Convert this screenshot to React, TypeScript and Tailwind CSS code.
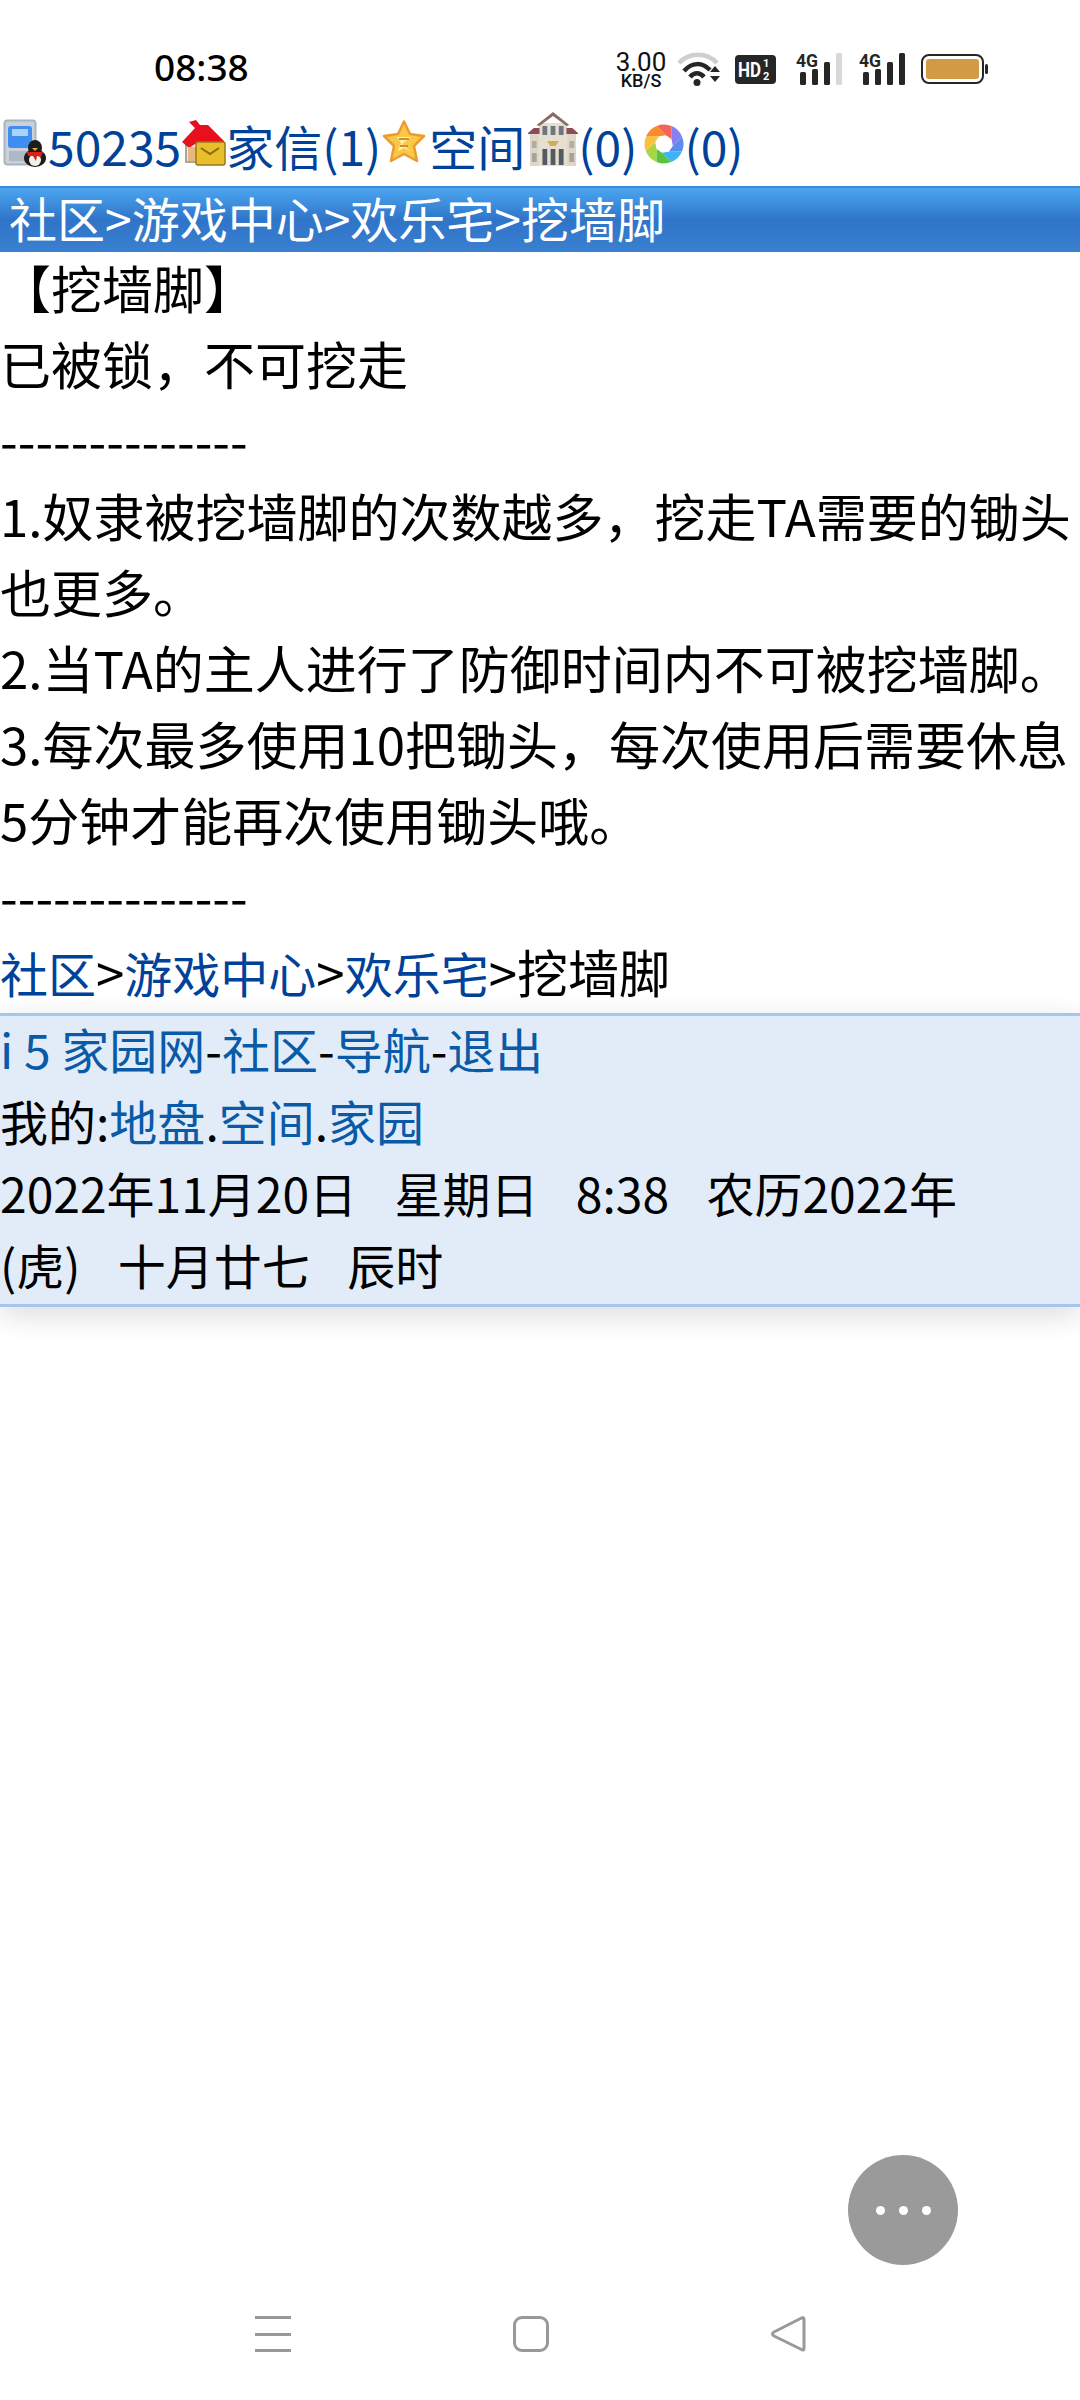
const cjk = { fontFamily: '"Noto Sans CJK SC", "Noto Sans", sans-serif' };

function PhoneQQ() {
    return (
        <svg width="45" height="48" viewBox="0 0 45 48" className="mb-[4px] shrink-0 blur-[0.6px]">
            <rect x="1.5" y="1.5" width="31" height="44" rx="3" fill="#c9d2da" stroke="#a9b4bf" strokeWidth="2" />
            <rect x="5" y="7" width="24" height="22" rx="3" fill="#3f8ff0" />
            <rect x="9" y="10" width="16" height="7" fill="#a9d3fb" />
            <rect x="6" y="32" width="22" height="10" fill="#aeb9c4" />
            <ellipse cx="32" cy="39" rx="11" ry="9" fill="#1d1d1d" />
            <ellipse cx="32" cy="29" rx="7" ry="8" fill="#1d1d1d" />
            <ellipse cx="32" cy="41" rx="6" ry="6" fill="#f3f0ea" />
            <path d="M24 33h16l-2 5-4-1-1 5-3-5-5 0z" fill="#d8201c" />
            <path d="M29 29h6l-3 3z" fill="#f2a922" />
        </svg>
    );
}

function HouseMail() {
    return (
        <svg width="45" height="46" viewBox="0 0 45 46" className="mb-[4px] shrink-0 blur-[0.6px]">
            <path d="M5 20h24v22H5z" fill="#efe9df" stroke="#8f8f8f" strokeWidth="1.5" />
            <path d="M1 22 14 8 8 2l7-2 4 5h8l16 16v3H14l-6 4z" fill="#e8101c" />
            <rect x="7" y="27" width="10" height="14" fill="#e6b77f" />
            <rect x="15" y="22" width="29" height="23" rx="2" fill="#e8bf2a" stroke="#9a7a16" strokeWidth="1.5" />
            <path d="M20 28l9 6 9-6" fill="none" stroke="#8a6b10" strokeWidth="2" />
        </svg>
    );
}

function Star() {
    return (
        <svg width="44" height="43" viewBox="0 0 44 43" className="ml-[1px] mb-[8px] shrink-0 blur-[0.6px]">
            <path d="M22 1.500 28 14l14 2-10 10 3 15-13-7-13 7 3-15L2 16l14-2z" fill="#f8c948" stroke="#ee9a2f" strokeWidth="2.5" strokeLinejoin="round" />
            <path d="M15 17h14l-9 7 8 7-6-3-6 3 3-8z" fill="#fdf0b0" />
            <path d="M17 19h10M18 26h8" stroke="#d9882a" strokeWidth="2" />
        </svg>
    );
}

function Building() {
    return (
        <svg width="50" height="56" viewBox="0 0 52 56" preserveAspectRatio="none" className="ml-[3px] mb-[12px] shrink-0 blur-[0.5px]">
            <rect x="2" y="22" width="48" height="33" fill="#ded7c8" />
            <rect x="11" y="12" width="30" height="43" fill="#e6dfd0" />
            <path d="M9 14 26 1l17 13-3 1-14-10-14 10z" fill="#8d6a6a" />
            <path d="M0 22l6-5h6v6H0zM52 22l-6-5h-6v6h12z" fill="#8c4a5c" />
            <rect x="15" y="15" width="5" height="9" fill="#6e7680" />
            <rect x="23.5" y="15" width="5" height="9" fill="#6e7680" />
            <rect x="32" y="15" width="5" height="9" fill="#6e7680" />
            <path d="M20 30h12l-3 5h-6z" fill="#d3ad55" />
            <rect x="15" y="38" width="5" height="16" fill="#545a60" />
            <rect x="23.5" y="38" width="5" height="16" fill="#545a60" />
            <rect x="32" y="38" width="5" height="16" fill="#545a60" />
            <rect x="4" y="30" width="5" height="7" fill="#b3aea3" />
            <rect x="43" y="30" width="5" height="7" fill="#b3aea3" />
            <rect x="4" y="42" width="5" height="9" fill="#a8a399" />
            <rect x="43" y="42" width="5" height="9" fill="#a8a399" />
        </svg>
    );
}

const blades = ['#f2655f', '#8a7ff0', '#5b8dee', '#3fb4f5', '#5cc43c', '#a6d642', '#f9c23c', '#fb8a2a'];

function Aperture() {
    const pt = (r: number, deg: number) => {
        const a = (deg - 90) * Math.PI / 180;
        return `${(20 + r * Math.cos(a)).toFixed(2)} ${(20 + r * Math.sin(a)).toFixed(2)}`;
    };
    return (
        <svg width="40" height="40" viewBox="0 0 40 40" className="ml-[7px] mb-[2px] shrink-0 blur-[0.5px]">
            {blades.map((c, i) => {
                const s = i * 45 - 22;
                return (
                    <path
                        key={c}
                        d={`M${pt(19.5, s)} A19.5 19.5 0 0 1 ${pt(19.5, s + 45)} L${pt(9, s + 80)} L${pt(9, s + 35)} Z`}
                        fill={c}
                    />
                );
            })}
            <circle cx="20" cy="20" r="8" fill="#fff" />
        </svg>
    );
}

function Wifi() {
    return (
        <svg width="44" height="36" viewBox="0 0 44 36" className="shrink-0">
            <path d="M2 12C12 1 30 1 40 12" fill="none" stroke="#cfcfcf" strokeWidth="4.5" />
            <path d="M7 20C15 11 25 11 33 19" fill="none" stroke="#262626" strokeWidth="4.5" />
            <path d="M13 26C17 21 23 21 27 26" fill="none" stroke="#262626" strokeWidth="4.5" />
            <circle cx="20" cy="31.5" r="3.5" fill="#262626" />
            <path d="M33 21h10l-5-6zM33 25h10l-5 6z" fill="#262626" />
        </svg>
    );
}

function HdBadge() {
    return (
        <svg width="41" height="29" viewBox="0 0 41 29" className="shrink-0">
            <rect width="41" height="29" rx="4" fill="#262626" />
            <text x="3" y="22" fontSize="21" fontWeight="700" fill="#fff" fontFamily="Roboto, sans-serif" textLength="23" lengthAdjust="spacingAndGlyphs">HD</text>
            <text x="28" y="12" fontSize="11" fontWeight="700" fill="#fff" fontFamily="Roboto, sans-serif">1</text>
            <text x="28" y="25" fontSize="11" fontWeight="700" fill="#fff" fontFamily="Roboto, sans-serif">2</text>
        </svg>
    );
}

function Signal({ full }: { full: boolean }) {
    return (
        <svg width="46" height="37" viewBox="0 -5 46 37" className="shrink-0 -mt-[5px]">
            <text x="0" y="14" fontSize="18" fontWeight="700" fill="#262626" fontFamily="Roboto, sans-serif" textLength="22" lengthAdjust="spacingAndGlyphs">4G</text>
            <rect x="4" y="19" width="6" height="13" rx="1.5" fill="#262626" />
            <rect x="16" y="16" width="6" height="16" rx="1.5" fill="#262626" />
            <rect x="28" y="9" width="6" height="23" rx="1.5" fill="#262626" />
            <rect x="40" y="0" width="6" height="32" rx="1.5" fill={full ? '#262626' : '#d8d8d8'} />
        </svg>
    );
}

function Battery() {
    return (
        <svg width="67" height="30" viewBox="0 0 67 30" className="shrink-0">
            <rect x="1" y="1" width="61" height="28" rx="7" fill="#fff" stroke="#262626" strokeWidth="2" />
            <rect x="5" y="5" width="53" height="20" rx="3" fill="#d39a45" />
            <rect x="64" y="10" width="3" height="10" rx="1.5" fill="#262626" />
        </svg>
    );
}

function StatusBar() {
    return (
        <div className="flex h-[110px] shrink-0 items-center pl-[154px] pr-[92px] pt-[28px]">
            <span className="-mt-[6px] text-[37px] font-medium leading-none text-black" style={{ fontFamily: '"Noto Sans", sans-serif' }}>08:38</span>
            <div className="ml-auto flex items-center">
                <div className="flex w-[52px] flex-col items-center text-[#111]" style={{ fontFamily: 'Roboto, sans-serif' }}>
                    <span className="text-[26px] leading-[22px]">3.00</span>
                    <span className="text-[18px] font-medium leading-[15px]">KB/S</span>
                </div>
                <div className="ml-[10px]"><Wifi /></div>
                <div className="ml-[14px]"><HdBadge /></div>
                <div className="ml-[20px]"><Signal full={false} /></div>
                <div className="ml-[17px]"><Signal full /></div>
                <div className="ml-[16px]"><Battery /></div>
            </div>
        </div>
    );
}

function Nav() {
    return (
        <div className="flex h-[84px] shrink-0 items-start gap-[222px] pl-[255px]">
            <div className="flex h-[36px] w-[36px] flex-col justify-between">
                <div className="h-[3px] bg-[#999]" />
                <div className="h-[3px] bg-[#999]" />
                <div className="h-[3px] bg-[#999]" />
            </div>
            <div className="h-[36px] w-[36px] rounded-[9px] border-[3px] border-[#999]" />
            <svg width="36" height="36" viewBox="0 0 36 36">
                <path d="M33 3.500v29q0 2.500-2.500 1L3 20q-3-2 0-4L30.500 2q2.500-1 2.500 1.500z" fill="none" stroke="#999" strokeWidth="3" strokeLinejoin="round" />
            </svg>
        </div>
    );
}

const bodyLines = [
    '\u3010挖墙脚\u3011',
    '已被锁，不可挖走',
    '--------------',
    '1.奴隶被挖墙脚的次数越多，挖走TA需要的锄头',
    '也更多。',
    '2.当TA的主人进行了防御时间内不可被挖墙脚。',
    '3.每次最多使用10把锄头，每次使用后需要休息',
    '5分钟才能再次使用锄头哦。',
    '--------------',
];

export default function App() {
    return (
        <div className="relative flex h-[2400px] w-[1080px] flex-col overflow-hidden bg-white text-[48px] text-black" style={cjk}>
            <StatusBar />

            <div className="flex h-[76px] shrink-0 items-center whitespace-nowrap pb-[6px] pl-[3px] text-[#004299]">
                <PhoneQQ />
                <span>50235</span>
                <HouseMail />
                <span>家信(1)</span>
                <Star />
                <span className="ml-[3px]">空间</span>
                <Building />
                <span>(0)</span>
                <Aperture />
                <span>(0)</span>
            </div>

            <div className="flex h-[66px] shrink-0 items-center whitespace-nowrap border-t-2 border-[#3a87dc] bg-[linear-gradient(#4ba6f0,#2f74c8_50%,#3a80d0)] pb-[6px] pl-[9px] text-white">
                社区&gt;游戏中心&gt;欢乐宅&gt;挖墙脚
            </div>

            <div className="-mt-[3px] pb-[3px] whitespace-nowrap text-[51px] leading-[76px]">
                {bodyLines.map((l, i) => <div key={i}>{l}</div>)}
                <div>
                    <span className="text-[48px] text-[#004299]">社区</span>&gt;
                    <span className="text-[48px] text-[#004299]">游戏中心</span>&gt;
                    <span className="text-[48px] text-[#004299]">欢乐宅</span>&gt;挖墙脚
                </div>
            </div>

            <div className="shrink-0 whitespace-nowrap border-y-[3px] border-[#a5c7ec] bg-[#e1ecf8] leading-[72px] shadow-[0_8px_28px_rgba(0,0,0,0.14)]">
                <div className="-mt-[4px] pb-[4px]">
                    <div>
                        <span className="text-[#0a5aa8]">i 5 家园网</span>-<span className="text-[#0a5aa8]">社区</span>-<span className="text-[#0a5aa8]">导航</span>-<span className="text-[#0a5aa8]">退出</span>
                    </div>
                    <div>
                        我的:<span className="text-[#0a5aa8]">地盘</span>.<span className="text-[#0a5aa8]">空间</span>.<span className="text-[#0a5aa8]">家园</span>
                    </div>
                    <div className="whitespace-pre [word-spacing:1.7px]">2022年11月20日   星期日   8:38   农历2022年</div>
                    <div className="whitespace-pre [word-spacing:1.7px]">(虎)   十月廿七   辰时</div>
                </div>
            </div>

            <div className="flex-1" />
            <Nav />

            <div className="absolute left-[848px] top-[2155px] flex h-[110px] w-[110px] items-center justify-center gap-[14px] rounded-full bg-[#9a9a9a]">
                <div className="h-[9px] w-[9px] rounded-full bg-white" />
                <div className="h-[9px] w-[9px] rounded-full bg-white" />
                <div className="h-[9px] w-[9px] rounded-full bg-white" />
            </div>
        </div>
    );
}
